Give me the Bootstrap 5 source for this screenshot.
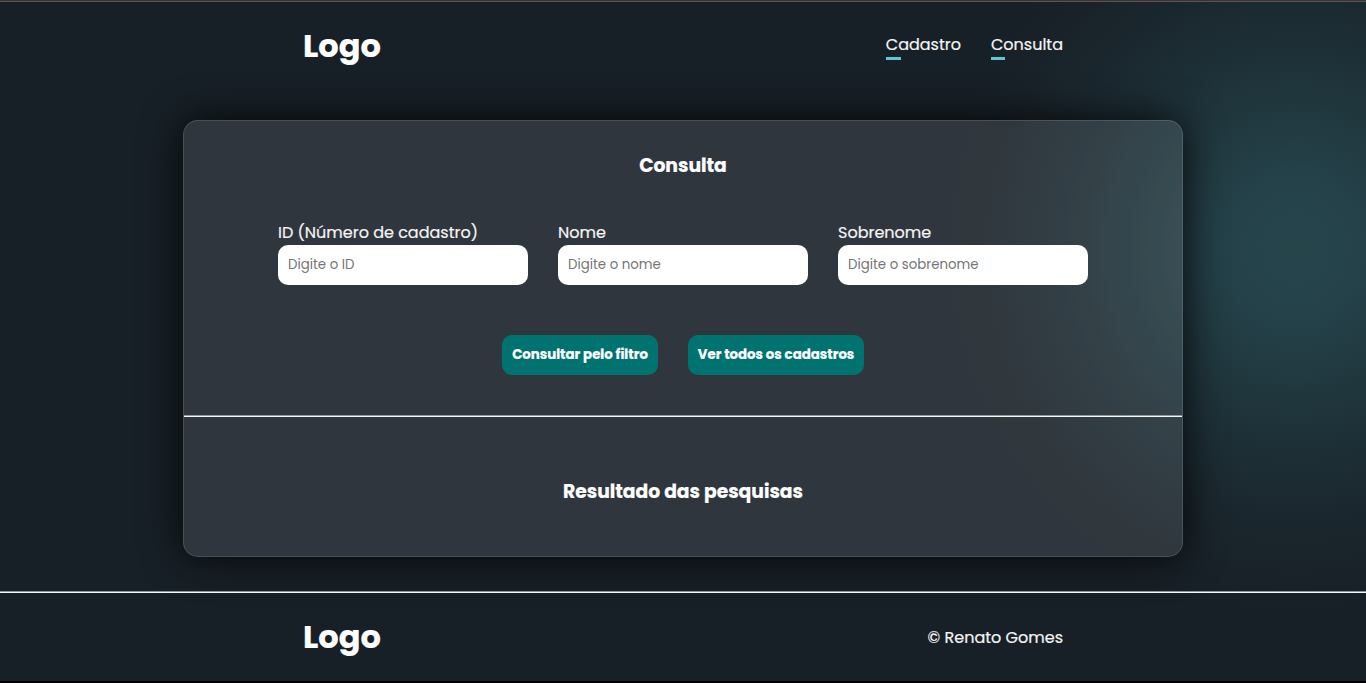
<!DOCTYPE html>
<html lang="pt-BR">
<head>
<meta charset="utf-8">
<meta name="viewport" content="width=device-width, initial-scale=1">
<title>Consulta</title>
<link href="https://cdn.jsdelivr.net/npm/bootstrap@5.3.0/dist/css/bootstrap.min.css" rel="stylesheet">
<style>
body{height:683px;overflow:hidden;font-family:Poppins,Inter,"Open Sans",sans-serif;font-size:16px;line-height:24px;color:#f5f5f5;-webkit-text-stroke:.2px;border-top:1px solid #3a3233;border-bottom:2px solid #000;background:radial-gradient(ellipse 350px 370px at 1295px 248px,#26454b 0,#25424a 18%,#1f343b 45%,#1b282f 70%,#192229 88%,#182027 100%) #182027}
.site-header{height:119px;border-top:1px solid #595657}
.inner{width:760px;padding-top:20px}
.brand-name{font-size:32px;line-height:48px;font-weight:700;color:#fff}
.menu{gap:30px;padding-top:11px}
.menu-link{color:#f5f5f5;text-decoration:none}
.menu-link::after{content:"";display:block;width:20%;height:3px;background:#5bc8d5}
.panel{width:1000px;height:437px;border:1px solid rgba(255,255,255,.13);border-radius:15px;background:rgba(255,255,255,.1)}
.panel-wrap{border-radius:15px;box-shadow:0 0 40px rgba(0,0,0,.85)}
.heading{font-size:18.72px;line-height:28px;font-weight:700;color:#fff}
.panel form{padding-top:31px;height:294px}
.fields{gap:30px;margin-top:41px}
.field{width:250px}
.field .form-control{height:40px;border:0;border-radius:10px;padding:0 10px;font-size:13.33px;background:#fff;-webkit-text-stroke:0}
.form-control::placeholder{color:#757575}
.actions{gap:30px;margin-top:50px}
.action{height:40px;border:0;border-radius:10px;background:#007270;color:#fff;font-weight:700;font-size:13.33px;padding:0}
.action:hover{background:#008582;color:#fff}
.filter-action{width:156px}
.all-action{width:176px}
.results-title{padding-top:61px}
.site-footer{height:90px}
.credit{padding-top:13px}
.rule{height:2px;border-top:1px solid #929596;background:#f8f8f8}
</style>
</head>
<body class="d-flex flex-column">
<header class="site-header">
  <div class="inner mx-auto d-flex justify-content-between">
    <div class="brand-name">Logo</div>
    <nav class="menu d-flex">
      <a class="menu-link" href="#">Cadastro</a>
      <a class="menu-link" href="#">Consulta</a>
    </nav>
  </div>
</header>
<main class="panel-wrap mx-auto">
  <section class="panel">
    <form>
      <h1 class="heading text-center m-0">Consulta</h1>
      <div class="fields d-flex justify-content-center">
        <div class="field"><label class="d-block" for="id">ID (Número de cadastro)</label><input id="id" class="form-control" placeholder="Digite o ID"></div>
        <div class="field"><label class="d-block" for="nome">Nome</label><input id="nome" class="form-control" placeholder="Digite o nome"></div>
        <div class="field"><label class="d-block" for="sobrenome">Sobrenome</label><input id="sobrenome" class="form-control" placeholder="Digite o sobrenome"></div>
      </div>
      <div class="actions d-flex justify-content-center">
        <button type="button" class="btn action filter-action">Consultar pelo filtro</button>
        <button type="button" class="btn action all-action">Ver todos os cadastros</button>
      </div>
    </form>
    <div class="rule"></div>
    <h2 class="heading results-title text-center m-0">Resultado das pesquisas</h2>
  </section>
</main>
<footer class="site-footer mt-auto">
  <div class="rule"></div>
  <div class="inner mx-auto d-flex justify-content-between">
    <div class="brand-name">Logo</div>
    <div class="credit">© Renato Gomes</div>
  </div>
</footer>
<script src="https://cdn.jsdelivr.net/npm/bootstrap@5.3.0/dist/js/bootstrap.bundle.min.js"></script>
</body>
</html>
